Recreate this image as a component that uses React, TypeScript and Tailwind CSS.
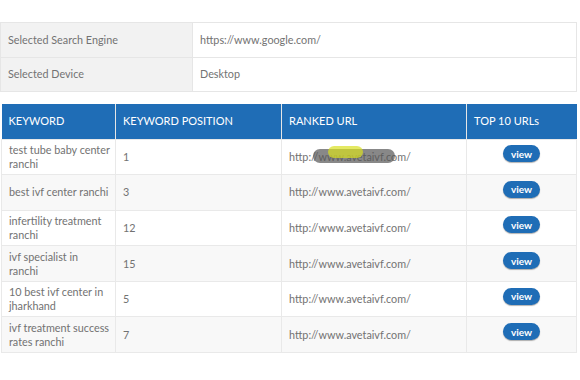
import React from 'react';

const rows = [
  { keyword: ['test tube baby center', 'ranchi'], position: '1', url: 'http://www.avetaivf.com/', marked: true },
  { keyword: ['best ivf center ranchi'], position: '3', url: 'http://www.avetaivf.com/' },
  { keyword: ['infertility treatment', 'ranchi'], position: '12', url: 'http://www.avetaivf.com/' },
  { keyword: ['ivf specialist in', 'ranchi'], position: '15', url: 'http://www.avetaivf.com/' },
  { keyword: ['10 best ivf center in', 'jharkhand'], position: '5', url: 'http://www.avetaivf.com/' },
  { keyword: ['ivf treatment success', 'rates ranchi'], position: '7', url: 'http://www.avetaivf.com/' },
];

export default function App() {
  return (
    <div className="h-[380px] w-[580px] bg-white pt-[22px] font-['Lato','Open_Sans',sans-serif] text-[10.8px] text-[#727272]">
      {/* settings */}
      <table className="w-[577px] table-fixed border-collapse">
        <tbody>
          <tr className="h-[34.5px]">
            <td className="w-[192px] border border-[#e6e6e6] bg-[#f2f2f2] pl-[7px]">Selected Search Engine</td>
            <td className="border border-[#e6e6e6] pl-[7px]">https://www.google.com/</td>
          </tr>
          <tr className="h-[34.5px]">
            <td className="border border-[#e6e6e6] bg-[#f2f2f2] pl-[7px]">Selected Device</td>
            <td className="border border-[#e6e6e6] pl-[7px]">Desktop</td>
          </tr>
        </tbody>
      </table>

      {/* keyword results */}
      <table className="ml-px mt-3 w-[576px] table-fixed border-collapse leading-[14px]">
        <thead>
          <tr className="h-[35px] bg-[#1f6db6] text-left text-[11px] text-white">
            <th className="w-[114px] border-r border-[#e6e6e6] pl-[7px] font-normal">KEYWORD</th>
            <th className="w-[166px] border-r border-[#e6e6e6] pl-[7px] font-normal">KEYWORD POSITION</th>
            <th className="w-[185px] border-r border-[#e6e6e6] pl-[7px] font-normal">RANKED URL</th>
            <th className="pl-[7px] font-normal">TOP 10 URLs</th>
          </tr>
        </thead>
        <tbody>
          {rows.map((r, i) => (
            <tr key={r.keyword.join(' ')} className={`h-[35.6px] ${i % 2 === 1 ? 'bg-[#f8f8f8]' : 'bg-white'}`}>
              <td className="border border-[#e9e9e9] pl-[7px] pr-1">
                {r.keyword.map((line, j) => (
                  <div key={j}>{line}</div>
                ))}
              </td>
              <td className="border border-[#e9e9e9] pl-[7px]">{r.position}</td>
              <td className="border border-[#e9e9e9] pl-[7px]">
                <span className="relative">
                  {r.url}
                  {r.marked && (
                    <>
                      <span className="absolute left-[24px] top-[-1px] h-[14px] w-[82px] rounded-full bg-[#555]/70" />
                      <span className="absolute left-[39px] top-[-4px] h-[12px] w-[35px] rounded-full bg-[#d9e021]/70" />
                    </>
                  )}
                </span>
              </td>
              <td className="border border-[#e9e9e9] text-center">
                <button className="relative top-[-3px] h-[17px] w-[37px] rounded-full bg-[#1f6db6] text-[10px] font-bold leading-none text-white shadow-[0_1px_1px_rgba(0,0,0,0.3)]">
                  view
                </button>
              </td>
            </tr>
          ))}
        </tbody>
      </table>
    </div>
  );
}
